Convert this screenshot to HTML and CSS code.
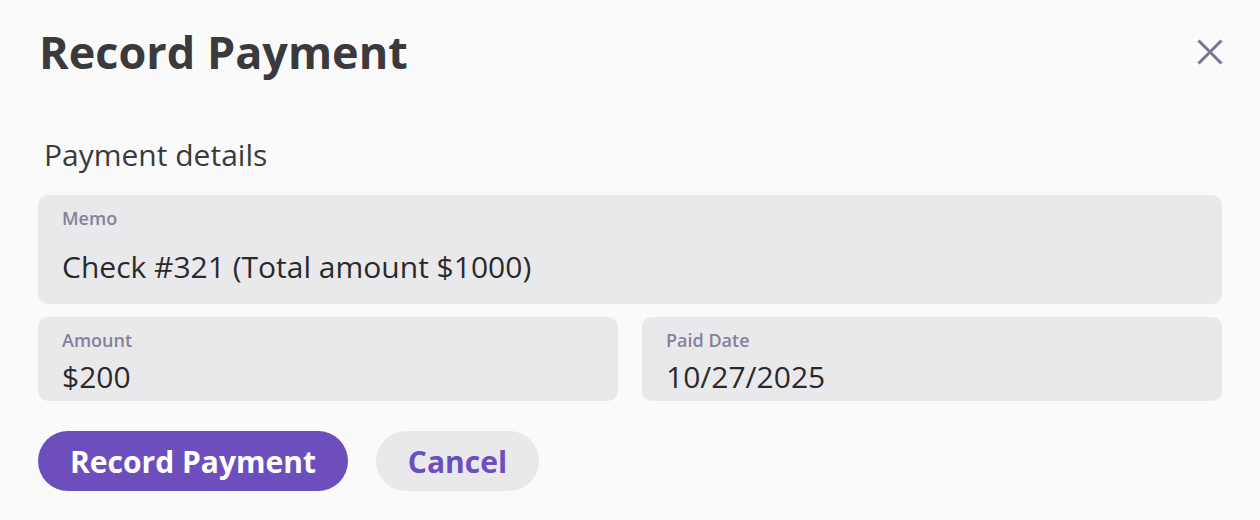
FILE: index.html
```html
<!DOCTYPE html>
<html lang="en">
<head>
<meta charset="utf-8">
<title>Record Payment</title>
<link rel="stylesheet" href="styles.css">
</head>
<body>
<div class="dialog">
  <header class="header">
    <h1 class="title">Record Payment</h1>
    <button class="close" aria-label="Close">
      <svg width="26" height="26" viewBox="0 0 26 26" fill="none" stroke="#7b7394" stroke-width="3" stroke-linecap="butt">
        <path d="M1.5 1.5 L24.5 24.5 M24.5 1.5 L1.5 24.5"/>
      </svg>
    </button>
  </header>
  <h2 class="section">Payment details</h2>
  <div class="fields">
    <div class="field memo">
      <span class="label">Memo</span>
      <span class="value">Check #321 (Total amount $1000)</span>
    </div>
    <div class="row">
      <div class="field">
        <span class="label">Amount</span>
        <span class="value">$200</span>
      </div>
      <div class="field">
        <span class="label">Paid Date</span>
        <span class="value">10/27/2025</span>
      </div>
    </div>
  </div>
  <div class="actions">
    <button class="btn primary">Record Payment</button>
    <button class="btn secondary">Cancel</button>
  </div>
</div>
</body>
</html>
```

FILE: styles.css
```css
* { box-sizing: border-box; }
html, body { margin: 0; padding: 0; }
body {
  background: #fafafa;
  font-family: "Open Sans", "Noto Sans", sans-serif;
  color: #3a3a3c;
}
.dialog {
  width: 1260px;
  height: 520px;
  padding: 24px 38px 0 38px;
}
.header {
  display: flex;
  justify-content: space-between;
  align-items: flex-start;
}
.title {
  margin: 0;
  font-size: 45px;
  font-weight: 700;
  line-height: 56px;
  color: #3a3a3c;
  padding-left: 1px;
}
.close {
  background: none;
  border: none;
  padding: 0;
  margin: 15px -1px 0 0;
  width: 26px;
  height: 26px;
  display: block;
}
.close svg { display: block; }
.section {
  margin: 55px 0 0 6px;
  font-size: 30px;
  font-weight: 400;
  line-height: 40px;
  color: #3a3a3c;
}
.fields {
  margin-top: 20px;
  display: flex;
  flex-direction: column;
  gap: 13px;
}
.row {
  display: grid;
  grid-template-columns: 1fr 1fr;
  gap: 24px;
}
.field {
  background: #e9e9ec;
  border-radius: 10px;
  padding: 10px 24px 0 24px;
  display: flex;
  flex-direction: column;
  height: 84px;
}
.field.memo { height: 109px; }
.label {
  font-size: 18px;
  font-weight: 600;
  line-height: 26px;
  color: #86809a;
}
.value {
  font-size: 30px;
  line-height: 40px;
  color: #2a2a2c;
  margin-top: 4px;
}
.memo .value { margin-top: 16px; }
.actions {
  margin-top: 30px;
  display: flex;
  gap: 28px;
}
.btn {
  height: 60px;
  border: none;
  border-radius: 30px;
  font-family: "Open Sans", "Noto Sans", sans-serif;
  font-size: 30px;
  font-weight: 700;
  padding: 0;
  cursor: pointer;
}
.primary {
  background: #6c4fbc;
  color: #ffffff;
  width: 310px;
}
.secondary {
  background: #e9e9ec;
  color: #6c4fbc;
  width: 163px;
}
```
